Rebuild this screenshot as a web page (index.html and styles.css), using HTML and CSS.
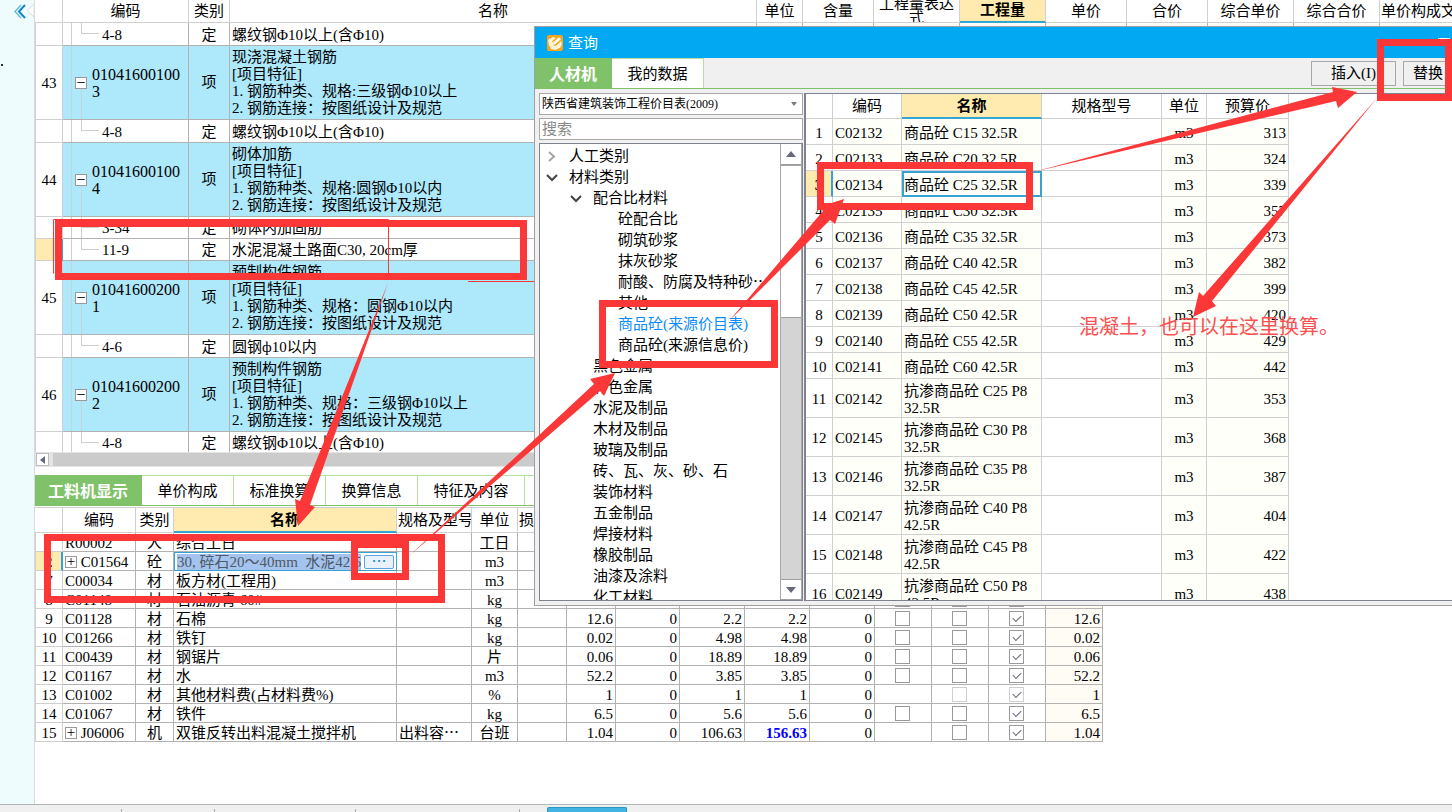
FILE: index.html
```html
<!DOCTYPE html>
<html lang="zh-CN">
<head>
<meta charset="utf-8">
<title>查询</title>
<link rel="stylesheet" href="styles.css">
</head>
<body>
<div class="app">
  <aside class="rail">
    <button class="rail-toggle" aria-label="收起"><svg width="34" height="24" viewBox="0 0 34 24" fill="none"><path d="M21 5l-6 6.500 6 6.500" stroke="#63bfe0" stroke-width="1.500"/><path d="M25 5l-6 6.500 6 6.500" stroke="#1489bd" stroke-width="2"/><path d="M34 4l-7 6.500 7 6.500z" fill="#fff" stroke="#dcdcdc"/></svg></button>
    <span class="rail-dot"></span>
  </aside>
  <main class="work">
    <table class="grid bill">
      <colgroup><col class="w28"><col class="w126"><col class="w41"><col class="w527"><col class="w46"><col class="w71"><col class="w86"><col class="w86"><col class="w81"><col class="w81"><col class="w86"><col class="w86"><col class="w86"></colgroup>
      <thead><tr><th></th><th>编码</th><th>类别</th><th>名称</th><th>单位</th><th>含量</th><th class="two"><div>工程量表达<br>式</div></th><th class="hot">工程量</th><th>单价</th><th>合价</th><th>综合单价</th><th>综合合价</th><th class="cut">单价构成文件</th></tr></thead>
      <tbody>
        <tr class="item"><td></td><td class="leaf">4-8</td><td>定</td><td>螺纹钢Φ10以上(含Φ10)</td><td></td><td></td><td></td><td></td><td></td><td></td><td></td><td></td><td></td></tr>
        <tr class="group"><td>43</td><td><div class="code"><button aria-label="折叠">−</button><span>01041600100<br>3</span></div></td><td>项</td><td>现浇混凝土钢筋<br>[项目特征]<br>1. 钢筋种类、规格:三级钢Φ10以上<br>2. 钢筋连接：按图纸设计及规范</td></tr>
        <tr class="item"><td></td><td class="leaf">4-8</td><td>定</td><td>螺纹钢Φ10以上(含Φ10)</td></tr>
        <tr class="group"><td>44</td><td><div class="code"><button aria-label="折叠">−</button><span>01041600100<br>4</span></div></td><td>项</td><td>砌体加筋<br>[项目特征]<br>1. 钢筋种类、规格:圆钢Φ10以内<br>2. 钢筋连接：按图纸设计及规范</td></tr>
        <tr class="item short"><td></td><td class="leaf mid">3-34</td><td>定</td><td>砌体内加固筋</td></tr>
        <tr class="item short current"><td></td><td class="leaf">11-9</td><td>定</td><td>水泥混凝土路面C30, 20cm厚</td></tr>
        <tr class="group"><td>45</td><td><div class="code"><button aria-label="折叠">−</button><span>01041600200<br>1</span></div></td><td>项</td><td>预制构件钢筋<br>[项目特征]<br>1. 钢筋种类、规格：圆钢Φ10以内<br>2. 钢筋连接：按图纸设计及规范</td></tr>
        <tr class="item"><td></td><td class="leaf">4-6</td><td>定</td><td>圆钢ф10以内</td></tr>
        <tr class="group"><td>46</td><td><div class="code"><button aria-label="折叠">−</button><span>01041600200<br>2</span></div></td><td>项</td><td>预制构件钢筋<br>[项目特征]<br>1. 钢筋种类、规格：三级钢Φ10以上<br>2. 钢筋连接：按图纸设计及规范</td></tr>
        <tr class="item last"><td></td><td class="leaf">4-8</td><td>定</td><td>螺纹钢Φ10以上(含Φ10)</td></tr>
      </tbody>
    </table>
    <div class="hscroll"><button aria-label="向左滚动"><svg width="5" height="8"><path d="M5 0v8L0 4z" fill="#666a7a"/></svg></button><div class="thumb"></div></div>
    <nav class="tabs lower-tabs"><button class="on">工料机显示</button><button>单价构成</button><button>标准换算</button><button>换算信息</button><button class="wide">特征及内容</button></nav>
    <table class="grid parts">
      <colgroup><col class="w28"><col class="w73"><col class="w38"><col class="w223"><col class="w75"><col class="w46"><col class="w49"><col class="w49"><col class="w64"><col class="w65"><col class="w65"><col class="w65"><col class="w57"><col class="w57"><col class="w57"><col class="w57"></colgroup>
      <thead><tr><th></th><th>编码</th><th>类别</th><th class="hot">名称</th><th class="cut">规格及型号</th><th>单位</th><th class="cut">损耗率</th><th colspan="9"></th></tr></thead>
      <tbody>
        <tr><td></td><td>R00002</td><td>人</td><td>综合工日</td><td></td><td>工日</td><td></td></tr>
        <tr class="current"><td>2</td><td><button class="plus" aria-label="展开">+</button> C01564</td><td>砼</td><td class="editing"><div class="edit"><input aria-label="名称" value="30, 碎石20～40mm  水泥42.5"><button aria-label="更多">⋯</button></div></td><td></td><td>m3</td><td></td></tr>
        <tr><td>7</td><td>C00034</td><td>材</td><td>板方材(工程用)</td><td></td><td>m3</td><td></td></tr>
        <tr><td>8</td><td>C01148</td><td>材</td><td>石油沥青 60#</td><td></td><td>kg</td><td></td><td></td><td></td><td></td><td></td><td></td><td><input type="checkbox" aria-label="选项一"></td><td><input type="checkbox" aria-label="选项二"></td><td><input type="checkbox" aria-label="选项三" checked></td><td></td></tr>
        <tr><td>9</td><td>C01128</td><td>材</td><td>石棉</td><td></td><td>kg</td><td></td><td>12.6</td><td>0</td><td>2.2</td><td>2.2</td><td>0</td><td><input type="checkbox" aria-label="选项一"></td><td><input type="checkbox" aria-label="选项二"></td><td><input type="checkbox" aria-label="选项三" checked></td><td>12.6</td></tr>
        <tr><td>10</td><td>C01266</td><td>材</td><td>铁钉</td><td></td><td>kg</td><td></td><td>0.02</td><td>0</td><td>4.98</td><td>4.98</td><td>0</td><td><input type="checkbox" aria-label="选项一"></td><td><input type="checkbox" aria-label="选项二"></td><td><input type="checkbox" aria-label="选项三" checked></td><td>0.02</td></tr>
        <tr><td>11</td><td>C00439</td><td>材</td><td>钢锯片</td><td></td><td>片</td><td></td><td>0.06</td><td>0</td><td>18.89</td><td>18.89</td><td>0</td><td><input type="checkbox" aria-label="选项一"></td><td><input type="checkbox" aria-label="选项二"></td><td><input type="checkbox" aria-label="选项三" checked></td><td>0.06</td></tr>
        <tr><td>12</td><td>C01167</td><td>材</td><td>水</td><td></td><td>m3</td><td></td><td>52.2</td><td>0</td><td>3.85</td><td>3.85</td><td>0</td><td><input type="checkbox" aria-label="选项一"></td><td><input type="checkbox" aria-label="选项二"></td><td><input type="checkbox" aria-label="选项三" checked></td><td>52.2</td></tr>
        <tr><td>13</td><td>C01002</td><td>材</td><td>其他材料费(占材料费%)</td><td></td><td>%</td><td></td><td>1</td><td>0</td><td>1</td><td>1</td><td>0</td><td></td><td><input type="checkbox" aria-label="选项二" disabled></td><td><input type="checkbox" aria-label="选项三" checked disabled></td><td>1</td></tr>
        <tr><td>14</td><td>C01067</td><td>材</td><td>铁件</td><td></td><td>kg</td><td></td><td>6.5</td><td>0</td><td>5.6</td><td>5.6</td><td>0</td><td><input type="checkbox" aria-label="选项一"></td><td><input type="checkbox" aria-label="选项二"></td><td><input type="checkbox" aria-label="选项三" checked></td><td>6.5</td></tr>
        <tr><td>15</td><td><button class="plus" aria-label="展开">+</button> J06006</td><td>机</td><td>双锥反转出料混凝土搅拌机</td><td>出料容⋯</td><td>台班</td><td></td><td>1.04</td><td>0</td><td>106.63</td><td class="changed">156.63</td><td>0</td><td></td><td><input type="checkbox" aria-label="选项二"></td><td><input type="checkbox" aria-label="选项三" checked></td><td>1.04</td></tr>
      </tbody>
    </table>
  </main>
</div>
<footer class="status"><i class="s121"></i><i class="s93"></i><i class="s141"></i><i class="s164"></i><b></b></footer>

<section class="dialog" role="dialog" aria-labelledby="dlg-title">
  <header class="titlebar">
    <svg width="16" height="16" viewBox="0 0 16 16"><rect width="16" height="16" rx="2" fill="#f9a51c"/><path d="M1 5l5-3 3 1-3 3 1 1-1 2 1 2 3-1 4-4 1 3-2 4-5 2-4-1-2-4z" fill="#fff3d6"/><path d="M6 10l1-3 5-5 2 2-5 5z" fill="#fff"/><path d="M5 7l6-5M8 10l6-5" stroke="#f9a51c"/></svg>
    <h1 id="dlg-title">查询</h1>
    <button class="minimize" aria-label="最小化"></button>
  </header>
  <div class="toolbar">
    <nav class="tabs"><button class="on">人材机</button><button>我的数据</button></nav>
    <div class="actions"><button>插入(I)</button><button class="replace">替换</button></div>
  </div>
  <div class="panes">
    <div class="left">
      <div class="combo"><select aria-label="价目表"><option>陕西省建筑装饰工程价目表(2009)</option></select><svg width="6" height="4"><path d="M0 0h6L3 4z" fill="#777b88"/></svg></div>
      <input class="search" type="text" placeholder="搜索" aria-label="搜索">
      <div class="listbox">
        <ul class="tree">
          <li><svg width="10" height="12" viewBox="0 0 10 12"><path d="M2 1l5 4.500L2 10" fill="none" stroke="#a5a5a5" stroke-width="2"/></svg>人工类别</li>
          <li><svg width="12" height="10" viewBox="0 0 12 10"><path d="M1 2l5 5 5-5" fill="none" stroke="#444" stroke-width="2"/></svg>材料类别</li>
          <li class="l2"><svg width="12" height="10" viewBox="0 0 12 10"><path d="M1 2l5 5 5-5" fill="none" stroke="#444" stroke-width="2"/></svg>配合比材料</li>
          <li class="l3">砼配合比</li><li class="l3">砌筑砂浆</li><li class="l3">抹灰砂浆</li><li class="l3">耐酸、防腐及特种砂⋯</li><li class="l3">其他</li><li class="l3 picked">商品砼(来源价目表)</li><li class="l3">商品砼(来源信息价)</li>
          <li class="l2">黑色金属</li><li class="l2">有色金属</li><li class="l2">水泥及制品</li><li class="l2">木材及制品</li><li class="l2">玻璃及制品</li><li class="l2">砖、瓦、灰、砂、石</li><li class="l2">装饰材料</li><li class="l2">五金制品</li><li class="l2">焊接材料</li><li class="l2">橡胶制品</li><li class="l2">油漆及涂料</li><li class="l2">化工材料</li>
        </ul>
        <div class="vscroll"><button aria-label="向上滚动"><svg width="10" height="6"><path d="M0 6h10L5 0z" fill="#666a7a"/></svg></button><div class="thumb"></div><div class="track"></div><button aria-label="向下滚动"><svg width="10" height="6"><path d="M0 0h10L5 6z" fill="#666a7a"/></svg></button></div>
      </div>
    </div>
    <div class="right">
      <table class="grid prices">
        <colgroup><col class="w27"><col class="w69"><col class="w140"><col class="w120"><col class="w45"><col class="w82"></colgroup>
        <thead><tr><th></th><th>编码</th><th class="hot">名称</th><th>规格型号</th><th>单位</th><th>预算价</th></tr></thead>
        <tbody>
          <tr><td>1</td><td>C02132</td><td>商品砼 C15 32.5R</td><td></td><td>m3</td><td>313</td></tr>
          <tr><td>2</td><td>C02133</td><td>商品砼 C20 32.5R</td><td></td><td>m3</td><td>324</td></tr>
          <tr class="current"><td>3</td><td>C02134</td><td>商品砼 C25 32.5R</td><td></td><td>m3</td><td>339</td></tr>
          <tr><td>4</td><td>C02135</td><td>商品砼 C30 32.5R</td><td></td><td>m3</td><td>357</td></tr>
          <tr><td>5</td><td>C02136</td><td>商品砼 C35 32.5R</td><td></td><td>m3</td><td>373</td></tr>
          <tr><td>6</td><td>C02137</td><td>商品砼 C40 42.5R</td><td></td><td>m3</td><td>382</td></tr>
          <tr><td>7</td><td>C02138</td><td>商品砼 C45 42.5R</td><td></td><td>m3</td><td>399</td></tr>
          <tr><td>8</td><td>C02139</td><td>商品砼 C50 42.5R</td><td></td><td>m3</td><td>420</td></tr>
          <tr><td>9</td><td>C02140</td><td>商品砼 C55 42.5R</td><td></td><td>m3</td><td>429</td></tr>
          <tr><td>10</td><td>C02141</td><td>商品砼 C60 42.5R</td><td></td><td>m3</td><td>442</td></tr>
          <tr class="tall"><td>11</td><td>C02142</td><td>抗渗商品砼 C25 P8<br>32.5R</td><td></td><td>m3</td><td>353</td></tr>
          <tr class="tall"><td>12</td><td>C02145</td><td>抗渗商品砼 C30 P8<br>32.5R</td><td></td><td>m3</td><td>368</td></tr>
          <tr class="tall"><td>13</td><td>C02146</td><td>抗渗商品砼 C35 P8<br>32.5R</td><td></td><td>m3</td><td>387</td></tr>
          <tr class="tall"><td>14</td><td>C02147</td><td>抗渗商品砼 C40 P8<br>42.5R</td><td></td><td>m3</td><td>404</td></tr>
          <tr class="tall"><td>15</td><td>C02148</td><td>抗渗商品砼 C45 P8<br>42.5R</td><td></td><td>m3</td><td>422</td></tr>
          <tr class="tall"><td>16</td><td>C02149</td><td>抗渗商品砼 C50 P8<br>42.5R</td><td></td><td>m3</td><td>438</td></tr>
        </tbody>
      </table>
    </div>
  </div>
</section>

<svg class="notes" width="1452" height="812" viewBox="0 0 1452 812">
  <g fill="none" stroke="#fc3737" stroke-width="7">
    <rect x="58.500" y="223.500" width="465" height="53"/>
    <rect x="47.500" y="537.500" width="394" height="62"/>
    <rect x="354.500" y="544.500" width="51" height="32"/>
    <rect x="602.500" y="303.500" width="172" height="61"/>
    <rect x="820.500" y="165.500" width="209" height="41"/>
    <rect x="1380.500" y="42.500" width="68" height="55"/>
    <g stroke-width="1"><path d="M388.500 273V219.500H53.500V273.500"/><path d="M468 281.500h66"/></g>
  </g>
  <g fill="#fc3737">
    <path d="M388 283L300 501l-5-2 3 27 17-19-5-2z"/>
    <path d="M409 556L594 384l-4-5 25-6-11 23-4-5z"/>
    <path d="M729 321L823 211l-4-4 25-8-9 25-5-4z"/>
    <path d="M1033 172l300-80-1-5 25 5-19 16-2-7z"/>
    <path d="M1377 98L1203 296l-4-4-6 25 23-11-4-5z"/>
  </g>
</svg>
<p class="caption">混凝土，也可以在这里换算。</p>
</body>
</html>
```

FILE: styles.css
```css
* { box-sizing: border-box; }
body {
  margin: 0;
  min-height: 100vh;
  display: flex;
  flex-direction: column;
  position: relative;
  overflow: hidden;
  background: #fff;
  color: #000;
  font: 15px/17px "Liberation Serif", "Noto Sans CJK SC", serif;
}
button, input, select { font: inherit; color: inherit; margin: 0; padding: 0; border-radius: 0; }
button { border: 0; background: none; }

.app { flex: 1; display: flex; min-width: 0; }
.rail { flex: 0 0 35px; background: #effcfe; border-right: 1px solid #d8dcdc; }
.rail-toggle { display: block; }
.rail-toggle svg { display: block; }
.rail-dot { display: block; width: 2px; height: 2px; margin: 40px 0 0 1px; background: #234; }
.work { flex: 1; min-width: 0; overflow: hidden; }

.grid { table-layout: fixed; width: 0; border-collapse: separate; border-spacing: 0; }
.grid th, .grid td { padding: 0; border: solid #b2b2b2; border-width: 0 1px 1px 0; overflow: hidden; text-align: center; white-space: nowrap; }
.grid th { font-weight: normal; border-color: #d0d0d0; }
.grid th.hot { background: #ffebb0; font-weight: bold; border-bottom: 2px solid #37a3d2; }
.grid th.cut { text-align: left; padding-left: 1px; }
.grid td:first-child { border-color: #d0d0d0; border-left: 1px solid #d0d0d0; }
.current td:first-child { background: #ffebb0; border-right: 2px solid #37a3d2; font-weight: bold; }

.w27 { width: 27px; } .w28 { width: 28px; } .w38 { width: 38px; } .w41 { width: 41px; }
.w45 { width: 45px; } .w46 { width: 46px; } .w49 { width: 49px; } .w57 { width: 57px; }
.w64 { width: 64px; } .w65 { width: 65px; } .w69 { width: 69px; } .w71 { width: 71px; }
.w73 { width: 73px; } .w75 { width: 75px; } .w81 { width: 81px; } .w82 { width: 82px; }
.w86 { width: 86px; } .w120 { width: 120px; } .w126 { width: 126px; } .w140 { width: 140px; }
.w223 { width: 223px; } .w527 { width: 527px; }

.bill th { height: 23px; }
.bill th.two { padding: 0; }
.two div { height: 22px; line-height: 14px; display: flex; align-items: center; justify-content: center; overflow: hidden; }
.bill td:nth-child(4) { text-align: left; padding-left: 2px; }
.grid .item td { height: 23px; padding-top: 2px; }
.grid .item.short td { height: 22px; }
.grid .item.last td { height: 20px; border-bottom: 0; }
.group td { height: 74px; background-color: #ade8fb; }
.grid .group td:first-child { background: #fff; padding-top: 2px; }
.grid td.leaf {
  text-align: left;
  padding-left: 39px;
  background: linear-gradient(#cfcfcf, #cfcfcf) 8px 0 / 1px 100% no-repeat, linear-gradient(#cfcfcf, #cfcfcf) 18px 0 / 1px 11px no-repeat, linear-gradient(#cfcfcf, #cfcfcf) 18px 10px / 18px 1px no-repeat;
}
.grid td.leaf.mid { background-size: 1px 100%, 1px 100%, 18px 1px; }
.group td:nth-child(2) { background-image: linear-gradient(#c4d4da, #c4d4da), linear-gradient(#c4d4da, #c4d4da); background-repeat: no-repeat; background-position: 8px 0, 18px 100%; background-size: 1px 100%, 1px 30px; }
.code { display: flex; align-items: center; gap: 5px; padding-left: 12px; font-size: 16px; text-align: left; }
.code button { width: 12px; height: 12px; background: #fff; border: 1px solid #999; line-height: 10px; }

.hscroll { display: flex; align-items: center; gap: 4px; height: 15px; padding-left: 1px; background: #e4e4e4; }
.hscroll button { display: flex; align-items: center; justify-content: center; width: 13px; height: 13px; background: #fff; border: 1px solid #bbb; }
.hscroll .thumb { flex: 1; height: 13px; background: #cbcbcb; }

.tabs { display: flex; }
.tabs button { padding-top: 2px; border: solid #b5e0a2; border-width: 1px 1px 0 0; background: #fff; }
.tabs .on { background: #80c269; border-color: #80c269; color: #fff; font-size: 16px; font-weight: bold; }
.lower-tabs { margin-top: 8px; height: 31px; border-bottom: 1px solid #80c269; background: linear-gradient(#b5e0a2, #b5e0a2) 0 0 / 100% 1px no-repeat; }
.lower-tabs button { width: 92px; }
.lower-tabs .on, .lower-tabs .wide { width: 107px; }

.parts { margin-top: 1px; }
.grid.parts th { height: 26px; padding-top: 1px; border-top: 1px solid #d0d0d0; }
.grid.parts td { height: 19px; line-height: 16px; padding-top: 2px; }
.parts td:nth-child(2), .parts td:nth-child(4), .parts td:nth-child(5) { text-align: left; padding-left: 2px; }
.parts td:nth-child(n+8) { text-align: right; padding-right: 2px; }
.grid.parts td:nth-child(n+13) { text-align: center; padding-top: 0; }
.grid.parts td:nth-child(16) { text-align: right; padding-top: 2px; background: #fffbf5; }
.parts .changed { color: #00f; font-weight: bold; }
.plus { width: 12px; height: 12px; border: 1px solid #999; line-height: 9px; vertical-align: 1px; }
.grid.parts .editing { border: 1px solid #37a3d2; padding: 0 2px 0 1px; }
.edit { display: flex; align-items: center; gap: 3px; height: 17px; }
.edit input { flex: 1; min-width: 0; height: 16px; border: 0; background: #a4c3ee; color: #4f5966; }
.edit button { width: 30px; height: 14px; border: 1px solid #5aa2e0; border-radius: 2px; background: #e9f1fa; color: #1685d8; line-height: 10px; }
input[type="checkbox"] { appearance: none; display: block; width: 15px; height: 15px; margin: 0 auto; border: 1px solid #999; background: #fff; }
input[type="checkbox"]:disabled { border-color: #d0d0d0; }
input[type="checkbox"]:checked::before { content: ""; display: block; width: 7px; height: 4px; margin: 3px 0 0 3px; border: solid #666a7a; border-width: 0 0 1px 1px; transform: rotate(-45deg); }

.status { display: flex; height: 8px; border-top: 1px solid #b4b4b4; background: #f0f0f0; }
.status i { height: 3px; margin-top: 4px; border-right: 1px solid #aaa; }
.s121 { width: 122px; } .s93 { width: 93px; } .s141 { width: 141px; } .s164 { width: 164px; }
.status b { width: 80px; height: 5px; margin: 2px 0 0 27px; background: #42b4e3; border: 1px solid #2596c4; border-bottom: 0; border-radius: 2px 2px 0 0; }

.dialog { position: absolute; left: 534px; top: 26px; right: 0; height: 580px; display: flex; flex-direction: column; border: solid #a0a0a0; border-width: 1px 0 1px 1px; background: #f0f0f0; }
.titlebar { display: flex; align-items: center; gap: 5px; height: 31px; padding-left: 12px; background: #02a8f1; color: #fff; }
.titlebar h1 { margin: 0; padding-top: 2px; font-size: 15px; font-weight: normal; }
.minimize { width: 12px; height: 2px; margin: 0 2px 8px auto; background: #fff; }
.toolbar { display: flex; justify-content: space-between; height: 31px; border-bottom: 1px solid #80c269; }
.toolbar .tabs button { width: 92px; }
.toolbar .tabs .on { width: 77px; }
.actions { display: flex; align-items: center; gap: 7px; }
.actions button { width: 85px; height: 25px; border: 1px solid #a8a8a8; }
.actions .replace { width: 49px; border-right: 0; }
.panes { flex: 1; min-height: 0; display: flex; gap: 1px; padding: 4px 0 4px 4px; }
.left { flex: 0 0 264px; display: flex; flex-direction: column; gap: 3px; }
.combo { position: relative; height: 22px; border: 1px solid #a8a8a8; background: #fff; }
.combo select { width: 100%; height: 20px; padding-left: 2px; appearance: none; border: 0; background: none; font-size: 12px; }
.combo svg { position: absolute; right: 5px; top: 8px; }
.search { height: 22px; padding: 0 2px; border: 1px solid #a8a8a8; background: #fff; }
.search::placeholder { color: #888; }
.listbox { flex: 1; min-height: 0; display: flex; border: 1px solid #7f8290; background: #fff; overflow: hidden; }
.tree { flex: 1; margin: 0; padding: 2px 0; list-style: none; overflow: hidden; white-space: nowrap; }
.tree li { display: flex; align-items: center; gap: 11px; height: 21px; padding-left: 6px; }
.tree li svg { width: 12px; }
.tree .l2 { padding-left: 53px; }
.tree .l2:has(svg) { padding-left: 30px; }
.tree .l3 { padding-left: 78px; }
.tree .picked { color: #0a8cff; }
.vscroll { flex: 0 0 22px; display: flex; flex-direction: column; border: solid #a8a8a8; border-width: 0 1px; }
.vscroll button { display: flex; align-items: center; justify-content: center; height: 21px; border-bottom: 1px solid #a0a0a0; background: #fff; }
.vscroll .thumb { height: 153px; border: solid #a0a0a0; border-width: 1px 0; background: #fff; }
.vscroll .track { flex: 1; background: #d4d4d4; }
.vscroll button:last-child { border-top: 1px solid #a0a0a0; }
.right { flex: 1; min-width: 0; border: solid #7f8290; border-width: 1px 0 1px 2px; background: #fff; overflow: hidden; }

.grid.prices th, .grid.prices td { border-color: #d0d0d0; }
.grid.prices th.hot { border-bottom-color: #37a3d2; }
.grid.prices th { height: 25px; padding-top: 1px; }
.grid.prices td { height: 26px; padding-top: 3px; background: #fffffa; }
.grid.prices td:first-child { border-left: 0; background: #fff; }
.prices td:nth-child(2), .prices td:nth-child(3) { text-align: left; padding-left: 2px; }
.grid.prices td:nth-child(4) { background: #fff; }
.prices td:nth-child(6) { text-align: right; padding-right: 2px; }
.grid.prices .tall td { height: 39px; }
.grid.prices .current td:first-child { background: #ffebb0; border-right: 2px solid #37a3d2; }
.grid.prices .current td:nth-child(3) { border: 2px solid #37a3d2; padding: 2px 0 0; }

/* selectors that out-rank the base cell reset */
.grid.bill td:nth-child(4), .grid.parts td:nth-child(2), .grid.parts td:nth-child(4), .grid.parts td:nth-child(5), .grid.prices td:nth-child(2), .grid.prices td:nth-child(3) { text-align: left; padding-left: 2px; }
.grid.parts td:nth-child(n+8):nth-child(-n+12), .grid.parts td:nth-child(16), .grid.prices td:nth-child(6) { text-align: right; padding-right: 2px; }

.notes { position: absolute; left: 0; top: 0; pointer-events: none; }
.caption { position: absolute; left: 1079px; top: 315px; margin: 0; color: #fb5050; font-size: 20px; line-height: 24px; white-space: nowrap; }
```
